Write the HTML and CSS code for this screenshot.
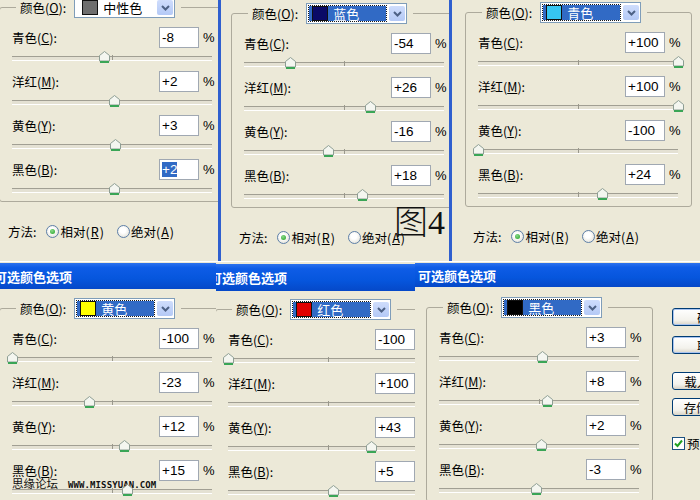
FILE: index.html
```html
<!DOCTYPE html>
<html lang="zh-CN">
<head>
<meta charset="utf-8">
<title>可选颜色选项</title>
<link rel="stylesheet" href="styles.css">
</head>
<body>
<svg class="defs" width="0" height="0" aria-hidden="true">
  <defs>
    <symbol id="thumb" viewBox="0 0 11 12">
      <path d="M0.5 4.5 L5.5 0.5 L10.5 4.5 V10 H0.5 Z" fill="#F4F6F0" stroke="#8E9E94"/>
      <rect x="1" y="10" width="9" height="2" fill="#3AA556"/>
    </symbol>
    <symbol id="chev" viewBox="0 0 9 6">
      <path d="M1 1 L4.5 4.5 L8 1" fill="none" stroke="#4D6185" stroke-width="2"/>
    </symbol>
    <symbol id="tick" viewBox="0 0 11 11">
      <path d="M2 5.5 L4.5 8 L9 2.5" fill="none" stroke="#21A121" stroke-width="2"/>
    </symbol>
  </defs>
</svg>
<div class="canvas">

  <!-- Top left: 中性色 -->
  <section class="win win-a">
    <div class="group">
      <div class="legend"><span class="lbl">颜色(<u>O</u>):</span>
        <span class="dd"><span class="sel"><i class="sw sw-grey"></i>中性色</span><span class="arr"><svg><use href="#chev"/></svg></span></span>
      </div>
      <div class="blk"><div class="row"><span class="lbl">青色(<u>C</u>):</span><span class="inp">-8</span><span class="pct">%</span></div>
        <div class="slider"><span class="thumb" style="--v:-8"><svg><use href="#thumb"/></svg></span></div></div>
      <div class="blk"><div class="row"><span class="lbl">洋红(<u>M</u>):</span><span class="inp">+2</span><span class="pct">%</span></div>
        <div class="slider"><span class="thumb" style="--v:2"><svg><use href="#thumb"/></svg></span></div></div>
      <div class="blk"><div class="row"><span class="lbl">黄色(<u>Y</u>):</span><span class="inp">+3</span><span class="pct">%</span></div>
        <div class="slider"><span class="thumb" style="--v:3"><svg><use href="#thumb"/></svg></span></div></div>
      <div class="blk"><div class="row"><span class="lbl">黑色(<u>B</u>):</span><span class="inp"><span class="hl">+2</span></span><span class="pct">%</span></div>
        <div class="slider"><span class="thumb" style="--v:2"><svg><use href="#thumb"/></svg></span></div></div>
    </div>
    <div class="method"><span class="m-lbl">方法:</span>
      <span class="opt"><i class="radio on"></i>相对(<u>R</u>)</span>
      <span class="opt"><i class="radio"></i>绝对(<u>A</u>)</span>
    </div>
  </section>

  <!-- Top middle: 蓝色 -->
  <section class="win win-b">
    <div class="group">
      <div class="legend"><span class="lbl">颜色(<u>O</u>):</span>
        <span class="dd on"><span class="sel"><i class="sw sw-navy"></i>蓝色</span><span class="arr"><svg><use href="#chev"/></svg></span></span>
      </div>
      <div class="blk"><div class="row"><span class="lbl">青色(<u>C</u>):</span><span class="inp">-54</span><span class="pct">%</span></div>
        <div class="slider"><span class="thumb" style="--v:-54"><svg><use href="#thumb"/></svg></span></div></div>
      <div class="blk"><div class="row"><span class="lbl">洋红(<u>M</u>):</span><span class="inp">+26</span><span class="pct">%</span></div>
        <div class="slider"><span class="thumb" style="--v:26"><svg><use href="#thumb"/></svg></span></div></div>
      <div class="blk"><div class="row"><span class="lbl">黄色(<u>Y</u>):</span><span class="inp">-16</span><span class="pct">%</span></div>
        <div class="slider"><span class="thumb" style="--v:-16"><svg><use href="#thumb"/></svg></span></div></div>
      <div class="blk"><div class="row"><span class="lbl">黑色(<u>B</u>):</span><span class="inp">+18</span><span class="pct">%</span></div>
        <div class="slider"><span class="thumb" style="--v:18"><svg><use href="#thumb"/></svg></span></div></div>
    </div>
    <div class="method"><span class="m-lbl">方法:</span>
      <span class="opt"><i class="radio on"></i>相对(<u>R</u>)</span>
      <span class="opt"><i class="radio"></i>绝对(<u>A</u>)</span>
    </div>
    <div class="fig">图4</div>
  </section>

  <!-- Top right: 青色 -->
  <section class="win win-c">
    <div class="group">
      <div class="legend"><span class="lbl">颜色(<u>O</u>):</span>
        <span class="dd on"><span class="sel"><i class="sw sw-cyan"></i>青色</span><span class="arr"><svg><use href="#chev"/></svg></span></span>
      </div>
      <div class="blk"><div class="row"><span class="lbl">青色(<u>C</u>):</span><span class="inp">+100</span><span class="pct">%</span></div>
        <div class="slider"><span class="thumb" style="--v:100"><svg><use href="#thumb"/></svg></span></div></div>
      <div class="blk"><div class="row"><span class="lbl">洋红(<u>M</u>):</span><span class="inp">+100</span><span class="pct">%</span></div>
        <div class="slider"><span class="thumb" style="--v:100"><svg><use href="#thumb"/></svg></span></div></div>
      <div class="blk"><div class="row"><span class="lbl">黄色(<u>Y</u>):</span><span class="inp">-100</span><span class="pct">%</span></div>
        <div class="slider"><span class="thumb" style="--v:-100"><svg><use href="#thumb"/></svg></span></div></div>
      <div class="blk"><div class="row"><span class="lbl">黑色(<u>B</u>):</span><span class="inp">+24</span><span class="pct">%</span></div>
        <div class="slider"><span class="thumb" style="--v:24"><svg><use href="#thumb"/></svg></span></div></div>
    </div>
    <div class="method"><span class="m-lbl">方法:</span>
      <span class="opt"><i class="radio on"></i>相对(<u>R</u>)</span>
      <span class="opt"><i class="radio"></i>绝对(<u>A</u>)</span>
    </div>
  </section>

  <!-- Bottom left: 黄色 -->
  <section class="win win-d">
    <div class="title"><span class="t-text">可选颜色选项</span></div>
    <div class="group">
      <div class="legend"><span class="lbl">颜色(<u>O</u>):</span>
        <span class="dd on"><span class="sel"><i class="sw sw-yellow"></i>黄色</span><span class="arr"><svg><use href="#chev"/></svg></span></span>
      </div>
      <div class="blk"><div class="row"><span class="lbl">青色(<u>C</u>):</span><span class="inp">-100</span><span class="pct">%</span></div>
        <div class="slider"><span class="thumb" style="--v:-100"><svg><use href="#thumb"/></svg></span></div></div>
      <div class="blk"><div class="row"><span class="lbl">洋红(<u>M</u>):</span><span class="inp">-23</span><span class="pct">%</span></div>
        <div class="slider"><span class="thumb" style="--v:-23"><svg><use href="#thumb"/></svg></span></div></div>
      <div class="blk"><div class="row"><span class="lbl">黄色(<u>Y</u>):</span><span class="inp">+12</span><span class="pct">%</span></div>
        <div class="slider"><span class="thumb" style="--v:12"><svg><use href="#thumb"/></svg></span></div></div>
      <div class="blk"><div class="row"><span class="lbl">黑色(<u>B</u>):</span><span class="inp">+15</span><span class="pct">%</span></div>
        <div class="slider"><span class="thumb" style="--v:15"><svg><use href="#thumb"/></svg></span></div></div>
    </div>
    <div class="mark"><span class="mark-cn">思缘论坛</span><span class="mark-url">WWW.MISSYUAN.COM</span></div>
  </section>

  <!-- Bottom middle: 红色 -->
  <section class="win win-e">
    <div class="title"><span class="t-text">可选颜色选项</span></div>
    <div class="group">
      <div class="legend"><span class="lbl">颜色(<u>O</u>):</span>
        <span class="dd on"><span class="sel"><i class="sw sw-red"></i>红色</span><span class="arr"><svg><use href="#chev"/></svg></span></span>
      </div>
      <div class="blk"><div class="row"><span class="lbl">青色(<u>C</u>):</span><span class="inp">-100</span><span class="pct">%</span></div>
        <div class="slider"><span class="thumb" style="--v:-100"><svg><use href="#thumb"/></svg></span></div></div>
      <div class="blk"><div class="row"><span class="lbl">洋红(<u>M</u>):</span><span class="inp">+100</span><span class="pct">%</span></div>
        <div class="slider"><span class="thumb" style="--v:100"><svg><use href="#thumb"/></svg></span></div></div>
      <div class="blk"><div class="row"><span class="lbl">黄色(<u>Y</u>):</span><span class="inp">+43</span><span class="pct">%</span></div>
        <div class="slider"><span class="thumb" style="--v:43"><svg><use href="#thumb"/></svg></span></div></div>
      <div class="blk"><div class="row"><span class="lbl">黑色(<u>B</u>):</span><span class="inp">+5</span><span class="pct">%</span></div>
        <div class="slider"><span class="thumb" style="--v:5"><svg><use href="#thumb"/></svg></span></div></div>
    </div>
  </section>

  <!-- Bottom right: 黑色 -->
  <section class="win win-f">
    <div class="title"><span class="t-text">可选颜色选项</span></div>
    <div class="body">
      <div class="group">
        <div class="legend"><span class="lbl">颜色(<u>O</u>):</span>
          <span class="dd on"><span class="sel"><i class="sw sw-black"></i>黑色</span><span class="arr"><svg><use href="#chev"/></svg></span></span>
        </div>
        <div class="blk"><div class="row"><span class="lbl">青色(<u>C</u>):</span><span class="inp">+3</span><span class="pct">%</span></div>
          <div class="slider"><span class="thumb" style="--v:3"><svg><use href="#thumb"/></svg></span></div></div>
        <div class="blk"><div class="row"><span class="lbl">洋红(<u>M</u>):</span><span class="inp">+8</span><span class="pct">%</span></div>
          <div class="slider"><span class="thumb" style="--v:8"><svg><use href="#thumb"/></svg></span></div></div>
        <div class="blk"><div class="row"><span class="lbl">黄色(<u>Y</u>):</span><span class="inp">+2</span><span class="pct">%</span></div>
          <div class="slider"><span class="thumb" style="--v:2"><svg><use href="#thumb"/></svg></span></div></div>
        <div class="blk"><div class="row"><span class="lbl">黑色(<u>B</u>):</span><span class="inp">-3</span><span class="pct">%</span></div>
          <div class="slider"><span class="thumb" style="--v:-3"><svg><use href="#thumb"/></svg></span></div></div>
      </div>
      <div class="side">
        <span class="btn def">确定</span>
        <span class="btn def b2">取消</span>
        <span class="btn b3">载入(<u>L</u>)...</span>
        <span class="btn b4">存储(<u>S</u>)...</span>
        <span class="check"><i class="chk"><svg><use href="#tick"/></svg></i>预览(<u>P</u>)</span>
      </div>
    </div>
  </section>

</div>
</body>
</html>
```

FILE: styles.css
```css
* { box-sizing: border-box; }
html, body { margin: 0; padding: 0; background: #ECE9D8; }
body {
  width: 700px;
  height: 500px;
  overflow: hidden;
  font-family: "Noto Sans CJK SC", "Liberation Sans", sans-serif;
  font-size: 12.5px;
  color: #000;
}
u { text-decoration: underline; text-underline-offset: 1px; text-decoration-thickness: 1px; }
i { font-style: normal; }
.defs { position: absolute; width: 0; height: 0; overflow: hidden; }

.canvas {
  position: relative;
  width: 700px;
  height: 500px;
  overflow: hidden;
  background: #ECE9D8;
}

/* windows placed on the collage canvas */
.win {
  position: absolute;
  overflow: hidden;
  background: #ECE9D8;
  display: flex;
  flex-direction: column;
  align-items: flex-start;
}
.win-a { left: 0; top: 0; width: 221px; height: 261px; border-right: 3px solid #2F5FCF; }
.win-a .group { margin: 7px 0 0 -1px; }

.win-b { left: 218px; top: 0; width: 234px; height: 261px; border-left: 3px solid #2F5FCF; border-right: 3px solid #2F5FCF; padding-left: 10px; }
.win-b .group { margin-top: 13px; }

.win-c { left: 452px; top: 0; width: 248px; height: 261px; padding-left: 13px; }
.win-c .group { margin-top: 12px; }

.win-d { left: 0; top: 261px; width: 216px; height: 239px; border-top: 1px solid #fff; }
.win-d .title { margin-top: 1px; height: 26px; }
.win-d .t-text { margin-left: -6px; }
.win-d .group { margin: 19px 0 0 -1px; }

.win-e { left: 216px; top: 261px; width: 199px; height: 239px; border-top: 1px solid #fff; }
.win-e .title { margin-top: 2px; height: 27px; }
.win-e .t-text { margin-left: -7px; }
.win-e .group { margin: 18px 0 0 -1px; }

.win-f { left: 415px; top: 261px; width: 285px; height: 239px; border-top: 1px solid #fff; }
.win-f .title { margin-top: 1px; height: 24px; }
.win-f .t-text { margin-left: 3px; }
.win-f .body { display: flex; align-items: flex-start; margin: 20px 0 0 11px; }

/* title bar */
.title {
  width: 100%;
  flex: none;
  display: flex;
  align-items: center;
  background: linear-gradient(#2C72EE 0, #0E5CE6 18%, #0656DD 60%, #0548C8 100%);
  color: #fff;
  font-weight: 700;
  font-size: 13px;
  white-space: nowrap;
  overflow: hidden;
}

/* group box */
.group {
  width: 227px;
  flex: none;
  display: flex;
  flex-direction: column;
  align-items: flex-start;
  border: 1px solid #ADAA9C;
  border-radius: 3px;
  padding-left: 12px;
}
.legend {
  display: flex;
  align-items: center;
  gap: 8px;
  height: 21px;
  margin: -11px 0 0 4px;
  padding: 0 6px 0 4px;
  background: #ECE9D8;
}
.lbl { line-height: 21px; white-space: nowrap; }

/* dropdown */
.dd {
  display: flex;
  width: 101px;
  height: 21px;
  border: 1px solid #7F9DB9;
  background: #fff;
  padding: 2px 1px 2px 2px;
}
.sel {
  flex: 1;
  display: flex;
  align-items: center;
  gap: 5px;
  padding-left: 5px;
  font-size: 13px;
  line-height: 15px;
  white-space: nowrap;
}
.dd.on .sel {
  background: #316AC5;
  color: #fff;
  outline: 1px dotted #1a1a1a;
  margin-right: 3px;
  padding-left: 3px;
}
.sw { display: block; width: 16px; height: 15px; border: 1px solid #111; flex: none; }
.sw-grey { background: #6E6E6E; }
.sw-navy { background: #0A0A66; }
.sw-cyan { background: #36C6F2; }
.sw-yellow { background: #FFFF00; }
.sw-red { background: #E00000; }
.sw-black { background: #000; }
.arr {
  width: 16px;
  height: 15px;
  flex: none;
  display: flex;
  align-items: center;
  justify-content: center;
  border-radius: 2px;
  background: linear-gradient(#CFDDFC, #B4C9F6);
}
.arr svg { width: 9px; height: 6px; display: block; }

/* slider rows */
.blk { height: 44px; flex: none; }
.legend + .blk { margin-top: 9px; }
.blk:last-child { height: 42px; }
.row { display: flex; align-items: center; height: 21px; }
.row .lbl { width: 147px; }
.inp {
  width: 40px;
  height: 21px;
  border: 1px solid #A0A8B2;
  background: #fff;
  font-family: "Liberation Sans", sans-serif;
  font-size: 13.5px;
  line-height: 19px;
  padding-left: 2px;
  white-space: nowrap;
}
.hl { background: #316AC5; color: #fff; }
.pct { margin-left: 4px; font-family: "Liberation Sans", sans-serif; font-size: 13px; }

.slider { position: relative; width: 200px; height: 23px; }
.slider::before {
  content: "";
  position: absolute;
  left: 0;
  right: 0;
  top: 8px;
  height: 3px;
  background: #E4E1D3;
  border-top: 1px solid #A19F93;
  border-bottom: 1px solid #fff;
}
.slider::after {
  content: "";
  position: absolute;
  left: 100px;
  top: 7px;
  width: 1px;
  height: 5px;
  background: #9A988C;
}
.thumb {
  position: absolute;
  z-index: 1;
  top: 3px;
  left: calc((var(--v) + 100) * 1px - 5px);
  width: 11px;
  height: 12px;
}
.thumb svg { display: block; width: 11px; height: 12px; }

/* method radios */
.method {
  display: flex;
  align-items: center;
  height: 17px;
  margin: 21px 0 0 8px;
  white-space: nowrap;
}
.m-lbl { margin-right: 10px; }
.opt { display: flex; align-items: center; gap: 1px; }
.opt + .opt { margin-left: 13px; }
.radio {
  width: 13px;
  height: 13px;
  border-radius: 50%;
  border: 1px solid #5D7FA8;
  background: radial-gradient(circle at 45% 40%, #fff 30%, #DCD9CC 100%);
  display: inline-flex;
  align-items: center;
  justify-content: center;
}
.radio.on::after {
  content: "";
  width: 5px;
  height: 5px;
  border-radius: 50%;
  background: radial-gradient(circle at 40% 35%, #8BD98B, #21A121);
}

/* figure label overlay */
.fig {
  position: absolute;
  left: 173px;
  top: 206px;
  font-family: "Liberation Serif", "Noto Sans CJK SC", serif;
  font-weight: 300;
  font-size: 34px;
  line-height: 34px;
  color: #111;
}

/* watermark overlay */
.mark {
  position: absolute;
  left: 12px;
  top: 214px;
  display: flex;
  align-items: baseline;
  line-height: 14px;
}
.mark-cn { font-size: 11.5px; color: #111; }
.mark-url {
  margin-left: 10px;
  font-family: "DejaVu Sans Mono", monospace;
  font-weight: 700;
  font-size: 9px;
  color: #111;
  letter-spacing: 0.1px;
}

/* right-hand buttons */
.side {
  display: flex;
  flex-direction: column;
  align-items: flex-start;
  margin: 1px 0 0 19px;
}
.btn {
  width: 75px;
  height: 18px;
  display: flex;
  align-items: center;
  justify-content: center;
  border: 1px solid #003C74;
  border-radius: 3px;
  background: linear-gradient(#FFFFFF, #F3F2EC 70%, #D8D3C7);
  white-space: nowrap;
  font-size: 12.5px;
}
.btn.def { box-shadow: inset 0 0 0 1px #A9C4F0; }
.b2 { margin-top: 10px; }
.b3 { margin-top: 18px; }
.b4 { margin-top: 8px; }
.check {
  display: flex;
  align-items: center;
  gap: 2px;
  margin-top: 18px;
  white-space: nowrap;
}
.chk {
  width: 13px;
  height: 13px;
  border: 1px solid #1C5180;
  background: #fff;
  display: inline-flex;
  align-items: center;
  justify-content: center;
}
.chk svg { width: 11px; height: 11px; display: block; }
```
